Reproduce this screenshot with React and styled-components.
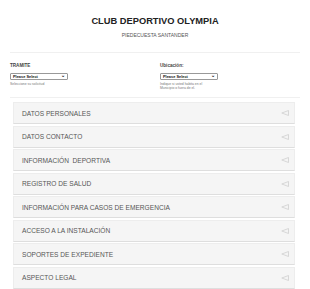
import React from "react";
import styled, { createGlobalStyle } from "styled-components";

const sections = [
  "DATOS PERSONALES",
  "DATOS CONTACTO",
  "INFORMACIÓN  DEPORTIVA",
  "REGISTRO DE SALUD",
  "INFORMACIÓN PARA CASOS DE EMERGENCIA",
  "ACCESO A LA INSTALACIÓN",
  "SOPORTES DE EXPEDIENTE",
  "ASPECTO LEGAL",
];

function Arrow() {
  return (
    <ArrowIcon width="8" height="6" viewBox="0 0 8 6">
      <path d="M7.5 0.5 L0.8 3 L7.5 5.5 Z" fill="#f4f4f4" stroke="#cfcfcf" strokeWidth="0.8" strokeLinejoin="round" />
    </ArrowIcon>
  );
}

function App() {
  return (
    <Wrapper>
      <GlobalStyle />
      <Header>
        <Title>CLUB DEPORTIVO OLYMPIA</Title>
        <Subtitle>PIEDECUESTA SANTANDER</Subtitle>
      </Header>
      <Rule />
      <Fields>
        <Field>
          <Label>TRAMITE</Label>
          <Select>
            <span>Please Select</span>
            <Chevron>⌄</Chevron>
          </Select>
          <Help>Seleccione su solicitud</Help>
        </Field>
        <Field>
          <Label>Ubicación:</Label>
          <Select>
            <span>Please Select</span>
            <Chevron>⌄</Chevron>
          </Select>
          <Help>
            Indique si usted habita en el
            <br />
            Municipio o fuera de el.
          </Help>
        </Field>
      </Fields>
      <Rule />
      <Accordion>
        {sections.map((s) => (
          <Item key={s}>
            <ItemText>{s}</ItemText>
            <Arrow />
          </Item>
        ))}
      </Accordion>
    </Wrapper>
  );
}

const GlobalStyle = createGlobalStyle`
  body {
    margin: 0;
    background: #fff;
    font-family: "Liberation Sans", Arial, sans-serif;
  }
`;

const Wrapper = styled.div`
  padding: 0 10px;
`;

const Header = styled.div`
  display: flex;
  flex-direction: column;
  align-items: center;
  padding-top: 16px;
  height: 52px;
  box-sizing: border-box;
`;

const Title = styled.h1`
  margin: 0;
  font-size: 9.3px;
  font-weight: bold;
  color: #222;
  line-height: 11px;
`;

const Subtitle = styled.div`
  margin-top: 4.5px;
  font-size: 5px;
  color: #555;
  line-height: 6px;
`;

const Rule = styled.div`
  height: 1px;
  background: #f0f0f0;
`;

const Fields = styled.div`
  display: grid;
  grid-template-columns: 150px 1fr;
  padding-top: 10px;
  height: 44px;
  box-sizing: border-box;
`;

const Field = styled.div`
  display: flex;
  flex-direction: column;
`;

const Label = styled.div`
  font-size: 4.6px;
  font-weight: bold;
  color: #444;
  line-height: 5px;
`;

const Select = styled.div`
  margin-top: 5px;
  width: 58px;
  height: 7px;
  box-sizing: border-box;
  border: 0.5px solid #999;
  border-radius: 1px;
  display: flex;
  align-items: center;
  justify-content: space-between;
  padding: 0 2px 0 2px;
  font-size: 3.9px;
  font-weight: bold;
  color: #111;
`;

const Chevron = styled.span`
  font-size: 5px;
  line-height: 5px;
  margin-top: -3px;
`;

const Help = styled.div`
  margin-top: 2px;
  font-size: 3.4px;
  line-height: 4px;
  color: #777;
`;

const Accordion = styled.div`
  display: flex;
  flex-direction: column;
  gap: 1.5px;
  padding: 4px 5px 0 3px;
`;

const Item = styled.div`
  height: 22px;
  box-sizing: border-box;
  background: #f5f5f5;
  border: 1px solid #ededed;
  border-bottom: 1px solid #dedede;
  display: flex;
  align-items: center;
  justify-content: space-between;
  padding: 0 5px 0 8px;
`;

const ItemText = styled.span`
  font-size: 6.6px;
  color: #555;
  white-space: pre;
`;

const ArrowIcon = styled.svg`
  display: block;
`;

export default App;
